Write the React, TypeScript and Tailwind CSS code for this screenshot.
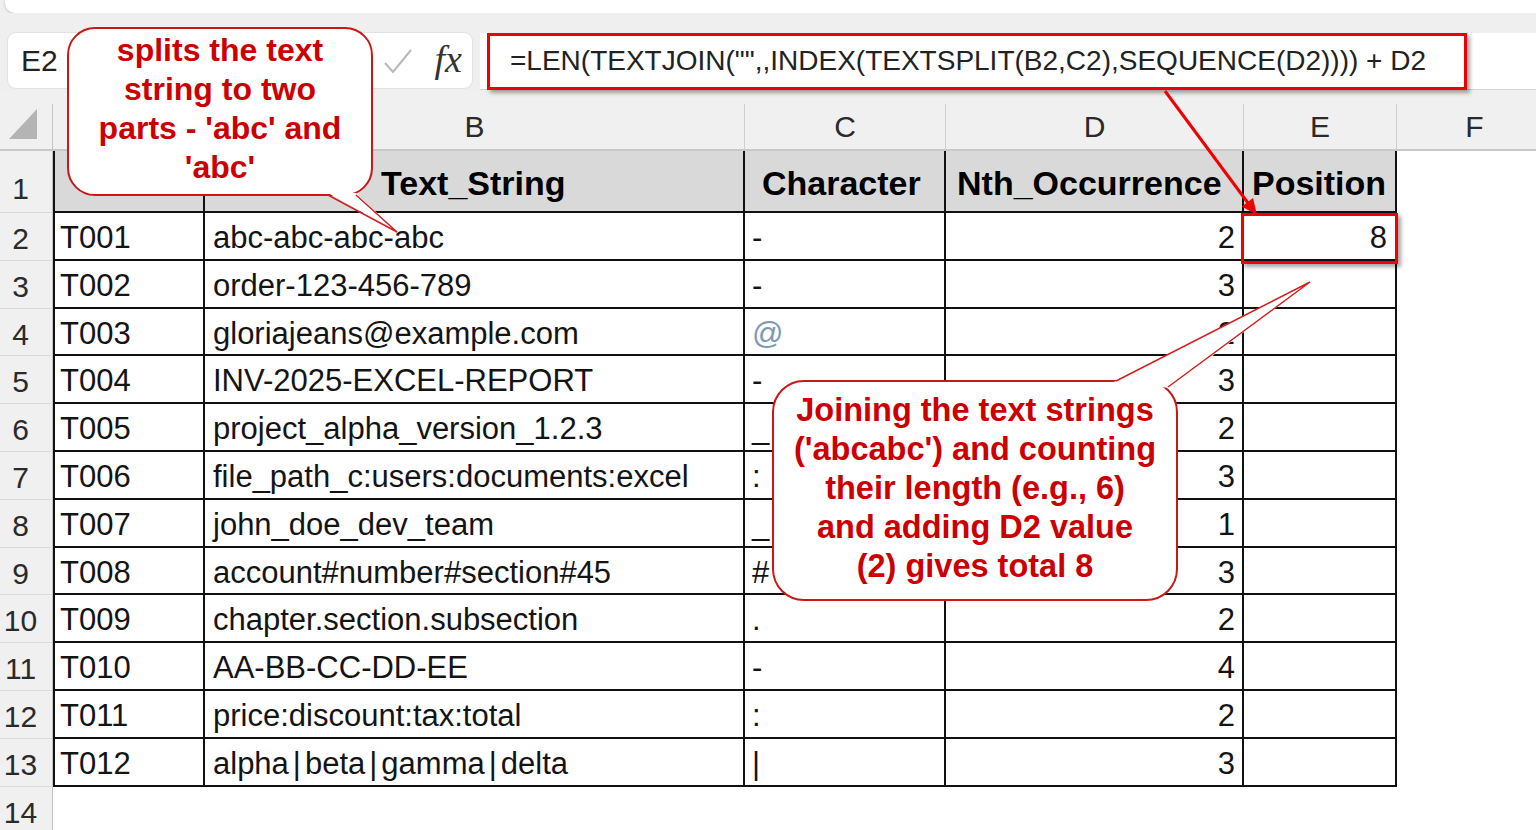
import React from "react";

const rows = [
    { id: "T001", text: "abc-abc-abc-abc", ch: "-", n: 2, pos: "8" },
    { id: "T002", text: "order-123-456-789", ch: "-", n: 3, pos: "" },
    { id: "T003", text: "gloriajeans@example.com", ch: "@", n: 2, pos: "" },
    { id: "T004", text: "INV-2025-EXCEL-REPORT", ch: "-", n: 3, pos: "" },
    { id: "T005", text: "project_alpha_version_1.2.3", ch: "_", n: 2, pos: "" },
    { id: "T006", text: "file_path_c:users:documents:excel", ch: ":", n: 3, pos: "" },
    { id: "T007", text: "john_doe_dev_team", ch: "_", n: 1, pos: "" },
    { id: "T008", text: "account#number#section#45", ch: "#", n: 3, pos: "" },
    { id: "T009", text: "chapter.section.subsection", ch: ".", n: 2, pos: "" },
    { id: "T010", text: "AA-BB-CC-DD-EE", ch: "-", n: 4, pos: "" },
    { id: "T011", text: "price:discount:tax:total", ch: ":", n: 2, pos: "" },
    { id: "T012", text: "alpha|beta|gamma|delta", ch: "|", n: 3, pos: "" },
];

const letters = [
    { l: "B", w: "w-[540px]" },
    { l: "C", w: "w-[201px]" },
    { l: "D", w: "w-[298px]" },
    { l: "E", w: "w-[153px]" },
    { l: "F", w: "w-[156px]" },
];

function CellText({ text }: { text: string }) {
    if (!text.includes("|")) return <>{text}</>;
    const parts = text.split("|");
    return (
        <>
            {parts.map((p, i) => (
                <React.Fragment key={i}>
                    {i > 0 && <span className="mx-[4px]">|</span>}
                    {p}
                </React.Fragment>
            ))}
        </>
    );
}

function RowHeader({ n, tall }: { n: number; tall?: boolean }) {
    return (
        <div
            className={`w-[53px] shrink-0 bg-[#f0f0f0] border-r border-b border-r-[#c4c4c4] border-b-[#dadada] text-[30px] leading-[40px] text-[#2a2a2a] text-center pr-[11px] ${
                tall ? "h-[62px] pt-[18px]" : "h-[47.8px] pt-[6px]"
            }`}
        >
            {n}
        </div>
    );
}

export default function App() {
    return (
        <div className="relative w-[1536px] h-[830px] overflow-hidden bg-white font-['Liberation_Sans',Arial,sans-serif]">
            {/* ribbon edge */}
            <div className="h-[13px] bg-[#efefef] pl-[5px]">
                <div className="h-full bg-white rounded-bl-[10px] shadow-[0_1px_3px_rgba(0,0,0,0.18)]" />
            </div>

            {/* formula bar */}
            <div className="h-[77px] bg-[#efefef] pt-[20px] flex">
                <div className="ml-[8px] w-[180px] h-[55px] bg-white rounded-[8px] shadow-[0_0_0_1px_#e2e2e2] flex items-center pl-[13px] text-[30px] text-[#222]">
                    E2
                </div>
                <div className="ml-[6px] w-[278px] h-[55px] bg-white rounded-[8px] shadow-[0_0_0_1px_#e2e2e2] flex items-center justify-end pr-[10px] gap-[22px]">
                    <svg width="30" height="28" viewBox="0 0 30 28">
                        <polyline
                            points="2,16 10,25 28,3"
                            fill="none"
                            stroke="#b8b8b8"
                            strokeWidth="2"
                        />
                    </svg>
                    <span className="font-['Liberation_Serif',serif] italic text-[38px] leading-none text-[#333] pb-[4px]">
                        fx
                    </span>
                </div>
                <div className="ml-[8px] flex-1 h-[57px] bg-white border-b border-[#d4d4d4] pl-[30px] flex items-center text-[28px] text-[#222] whitespace-nowrap">
                    =LEN(TEXTJOIN("",,INDEX(TEXTSPLIT(B2,C2),SEQUENCE(D2)))) + D2
                </div>
            </div>

            {/* column headers */}
            <div className="h-[61px] bg-[#f0f0f0] flex items-end border-b-2 border-[#c8c8c8]">
                <div className="w-[53px] shrink-0 h-[45px] border-r border-[#c4c4c4] flex items-center justify-center pr-[6px] pb-[6px]">
                    <svg width="28" height="30" viewBox="0 0 28 30">
                        <polygon points="28,0 28,30 0,30" fill="#b4b4b4" />
                    </svg>
                </div>
                <div className="w-[152px] shrink-0 h-[45px] border-r border-[#cfcfcf]" />
                {letters.map((c) => (
                    <div
                        key={c.l}
                        className={`${c.w} shrink-0 h-[45px] border-r border-[#cfcfcf] flex items-center justify-center text-[30px] text-[#2a2a2a]`}
                    >
                        {c.l}
                    </div>
                ))}
            </div>

            {/* header row */}
            <div className="flex">
                <RowHeader n={1} tall />
                <div className="flex h-[62px] text-[34px] leading-[40px] font-bold text-black">
                    <div className="w-[152px] bg-[#d9d9d9] border-l-2 border-r-2 border-b-2 border-[#111]" />
                    <div className="w-[540px] bg-[#d9d9d9] border-r-2 border-b-2 border-[#111] pt-[12px] pl-[176px]">
                        Text_String
                    </div>
                    <div className="w-[201px] bg-[#d9d9d9] border-r-2 border-b-2 border-[#111] pt-[12px] pl-[17px]">
                        Character
                    </div>
                    <div className="w-[298px] bg-[#d9d9d9] border-r-2 border-b-2 border-[#111] pt-[12px] pl-[11px] whitespace-nowrap">
                        Nth_Occurrence
                    </div>
                    <div className="w-[153px] bg-[#d9d9d9] border-r-2 border-b-2 border-[#111] pt-[12px] pl-[8px]">
                        Position
                    </div>
                </div>
            </div>

            {/* data rows */}
            {rows.map((r, i) => (
                <div key={r.id} className="flex">
                    <RowHeader n={i + 2} />
                    <div className="flex h-[47.8px] text-[31px] leading-[40px] text-[#141414] whitespace-nowrap">
                        <div className="w-[152px] border-l-2 border-r-2 border-b-2 border-[#111] pt-[5px] pl-[5px]">
                            {r.id}
                        </div>
                        <div className="w-[540px] border-r-2 border-b-2 border-[#111] pt-[5px] pl-[8px]">
                            <CellText text={r.text} />
                        </div>
                        <div
                            className={`w-[201px] border-r-2 border-b-2 border-[#111] pt-[5px] pl-[7px] ${
                                r.ch === "@" ? "text-[#7d98b3]" : ""
                            }`}
                        >
                            {r.ch}
                        </div>
                        <div className="w-[298px] border-r-2 border-b-2 border-[#111] pt-[5px] pr-[7px] text-right">
                            {r.n}
                        </div>
                        <div className="w-[153px] border-r-2 border-b-2 border-[#111] pt-[5px] pr-[8px] text-right">
                            {r.pos}
                        </div>
                    </div>
                </div>
            ))}
            <div className="flex">
                <RowHeader n={14} />
            </div>

            {/* annotation: formula box */}
            <div className="absolute left-[487px] top-[33px] w-[980px] h-[57px] border-[3px] border-[#f00000] shadow-[3px_3px_4px_rgba(0,0,0,0.35)]" />
            {/* annotation: E2 box */}
            <div className="absolute left-[1241px] top-[213px] w-[157px] h-[51px] border-[3px] border-[#f00000] shadow-[3px_3px_4px_rgba(0,0,0,0.35)]" />

            {/* callout 1 */}
            <div className="absolute left-[67px] top-[27px] w-[306px] h-[169px] bg-white border-2 border-[#c81818] rounded-[28px] pt-[2px] text-center text-[32px] leading-[39px] font-bold text-[#cc0000] whitespace-nowrap">
                <div>splits the text</div>
                <div>string to two</div>
                <div>parts - 'abc' and</div>
                <div>'abc'</div>
            </div>

            {/* callout 2 */}
            <div className="absolute left-[772px] top-[380px] w-[406px] h-[221px] bg-white border-2 border-[#c81818] rounded-[32px] pt-[9px] text-center text-[32.5px] leading-[39px] font-bold text-[#cc0000] whitespace-nowrap">
                <div>Joining the text strings</div>
                <div>('abcabc') and counting</div>
                <div>their length (e.g., 6)</div>
                <div>and adding D2 value</div>
                <div>(2) gives total 8</div>
            </div>

            {/* tails + arrow */}
            <svg
                className="absolute left-0 top-0 pointer-events-none"
                width="1536"
                height="830"
                viewBox="0 0 1536 830"
            >
                <polygon points="328,193 397,232 356,193" fill="#ffffff" />
                <polyline
                    points="328,195 397,232 356,195"
                    fill="none"
                    stroke="#d02020"
                    strokeWidth="1.5"
                />
                <polygon points="1112,383 1310,282 1170,388 1150,386" fill="#ffffff" />
                <polyline
                    points="1116,381 1310,282 1168,387"
                    fill="none"
                    stroke="#d02020"
                    strokeWidth="1.5"
                />
                <line
                    x1="1165"
                    y1="91"
                    x2="1248"
                    y2="203"
                    stroke="#f00000"
                    strokeWidth="3"
                />
                <polygon points="1257,215 1241.8,206.4 1253,198" fill="#f00000" />
            </svg>
        </div>
    );
}
